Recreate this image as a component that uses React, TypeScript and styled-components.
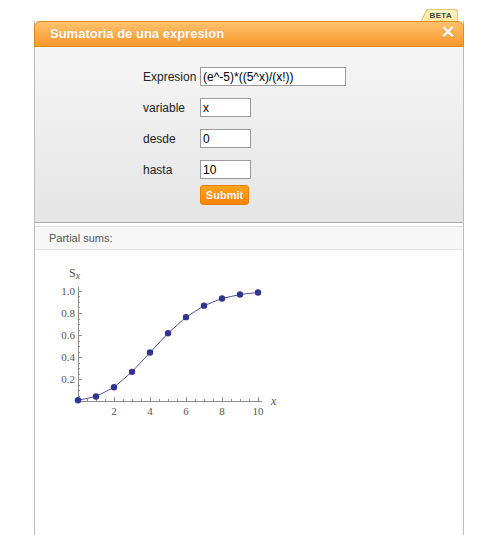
import styled, { createGlobalStyle } from "styled-components"

const GlobalStyle = createGlobalStyle`
  html, body {
    margin: 0;
    padding: 0;
    background: #fff;
    font-family: "Liberation Sans", Arial, sans-serif;
  }
`

const Page = styled.div`
  height: 535px;
  padding: 9px 0 0 34px;
  box-sizing: border-box;
  display: flex;
  flex-direction: column;
`

const TabRow = styled.div`
  width: 430px;
  display: flex;
  justify-content: flex-end;
  padding-right: 6px;
  box-sizing: border-box;
`

const BetaTab = styled.span`
  position: relative;
  z-index: 0;
  height: 12px;
  padding: 0 6px 0 9px;
  font-size: 8px;
  font-weight: bold;
  line-height: 13px;
  color: #444;
  letter-spacing: 0.3px;
  &::before,
  &::after {
    content: "";
    position: absolute;
    z-index: -1;
    clip-path: polygon(6px 0, 100% 0, 100% 100%, 0 100%);
    border-top-right-radius: 3px;
  }
  &::before {
    inset: 0;
    background: #e1c266;
  }
  &::after {
    inset: 1px 1px 0 1px;
    background: linear-gradient(#fff7c9, #fde9a0);
  }
`

const Panel = styled.div`
  width: 430px;
  flex: 1;
  display: flex;
  flex-direction: column;
  border-left: 1px solid #bcbcbc;
  border-right: 1px solid #bcbcbc;
  box-sizing: border-box;
`

const Header = styled.div`
  height: 26px;
  margin: 0 -1px;
  box-sizing: border-box;
  display: flex;
  align-items: center;
  justify-content: space-between;
  padding: 0 8px 1px 15px;
  background: linear-gradient(#fec16c, #f8992b);
  border: 1px solid #e08a1e;
  border-radius: 6px 6px 0 0;
  color: #fff;
`

const Title = styled.span`
  font-size: 13px;
  font-weight: bold;
  text-shadow: 0 0 1px rgba(160, 80, 0, 0.3);
`

const Close = styled.span`
  font-size: 17px;
  font-weight: bold;
  line-height: 1;
  margin-top: -2px;
  text-shadow: 0 1px 1px rgba(150, 70, 0, 0.4);
`

const FormArea = styled.div`
  padding: 20px 0 17px 108px;
  background: linear-gradient(#f5f5f5, #e5e5e5);
  border-bottom: 1px solid #a9a9a9;
`

const FormGrid = styled.div`
  display: grid;
  grid-template-columns: 57px auto;
  row-gap: 12px;
  align-items: center;
  justify-items: start;
`

const Label = styled.label`
  font-size: 12px;
  color: #222;
`

const Field = styled.input<{ $w: number }>`
  width: ${({ $w }) => $w}px;
  height: 19px;
  box-sizing: border-box;
  border: 1px solid #9a9a9a;
  background: #fff;
  padding: 0 2px;
  font-family: "Liberation Sans", Arial, sans-serif;
  font-size: 12px;
  color: #000;
  outline: none;
`

const Submit = styled.button`
  grid-column: 2;
  margin-top: -6px;
  width: 49px;
  height: 20px;
  padding: 0;
  border: 1px solid #e57f00;
  border-radius: 3px;
  background: linear-gradient(#ffa51f, #f98400);
  color: #fff;
  font-family: "Liberation Sans", Arial, sans-serif;
  font-size: 11px;
  font-weight: bold;
  text-shadow: 0 0 1px rgba(160, 70, 0, 0.5);
`

const ResultBar = styled.div`
  margin-top: 3px;
  height: 24px;
  box-sizing: border-box;
  padding-left: 14px;
  display: flex;
  align-items: center;
  border-top: 1px solid #dcdcdc;
  border-bottom: 1px solid #e6e6e6;
  background: #f7f7f7;
  font-size: 11px;
  color: #555;
`

const PlotArea = styled.div`
  padding: 11px 0 0 15px;
  background: #fff;
`

const poisson = [0.0067, 0.0404, 0.1247, 0.265, 0.4405, 0.616, 0.7622, 0.8666, 0.9319, 0.9682, 0.9863]

const X0 = 28
const Y0 = 140
const px = (i: number) => X0 + 18 * i
const py = (v: number) => Y0 - 110 * v

const Chart = () => {
  const yTicks = Array.from({ length: 21 }, (_, k) => k * 0.05)
  const xTicks = Array.from({ length: 21 }, (_, k) => k * 0.5)
  return (
    <svg width="250" height="160" viewBox="0 0 250 160">
      <g stroke="#8c8c8c" strokeWidth="1" shapeRendering="crispEdges">
        <line x1={X0 + 0.5} y1={26} x2={X0 + 0.5} y2={Y0} />
        <line x1={X0} y1={Y0 + 0.5} x2={212} y2={Y0 + 0.5} />
        {yTicks.slice(1).map((v, k) => {
          const major = (k + 1) % 4 === 0
          return <line key={k} x1={X0} y1={Math.round(py(v)) + 0.5} x2={X0 + (major ? 4 : 2)} y2={Math.round(py(v)) + 0.5} />
        })}
        {xTicks.slice(1).map((v, k) => {
          const major = (k + 1) % 4 === 0
          return <line key={k} x1={Math.round(px(v)) + 0.5} y1={Y0} x2={Math.round(px(v)) + 0.5} y2={Y0 - (major ? 4 : 2)} />
        })}
      </g>
      <g fontFamily="'Liberation Serif', 'DejaVu Serif', serif" fontSize="11" fill="#555">
        {[0.2, 0.4, 0.6, 0.8, 1.0].map(v => (
          <text key={v} x={X0 - 3} y={py(v) + 4} textAnchor="end">
            {v.toFixed(1)}
          </text>
        ))}
        {[2, 4, 6, 8, 10].map(v => (
          <text key={v} x={px(v)} y={Y0 + 14} textAnchor="middle">
            {v}
          </text>
        ))}
        <text x={221} y={Y0 + 4} fontStyle="italic" fontSize="12">x</text>
        <text x={19} y={16} fontSize="12">S<tspan fontStyle="italic" fontSize="10" dy="2">x</tspan></text>
      </g>
      <polyline
        points={poisson.map((v, i) => `${px(i)},${py(v)}`).join(" ")}
        fill="none"
        stroke="#3d3d99"
        strokeWidth="0.9"
      />
      {poisson.map((v, i) => (
        <circle key={i} cx={px(i)} cy={py(v)} r="3.2" fill="#34348f" />
      ))}
    </svg>
  )
}

export default function App() {
  return (
    <>
      <GlobalStyle />
      <Page>
        <TabRow>
          <BetaTab>BETA</BetaTab>
        </TabRow>
        <Panel>
          <Header>
            <Title>Sumatoria de una expresion</Title>
            <Close>✕</Close>
          </Header>
          <FormArea>
            <FormGrid>
              <Label>Expresion</Label>
              <Field $w={146} defaultValue="(e^-5)*((5^x)/(x!))" />
              <Label>variable</Label>
              <Field $w={51} defaultValue="x" />
              <Label>desde</Label>
              <Field $w={51} defaultValue="0" />
              <Label>hasta</Label>
              <Field $w={51} defaultValue="10" />
              <Submit>Submit</Submit>
            </FormGrid>
          </FormArea>
          <ResultBar>Partial sums:</ResultBar>
          <PlotArea>
            <Chart />
          </PlotArea>
        </Panel>
      </Page>
    </>
  )
}
